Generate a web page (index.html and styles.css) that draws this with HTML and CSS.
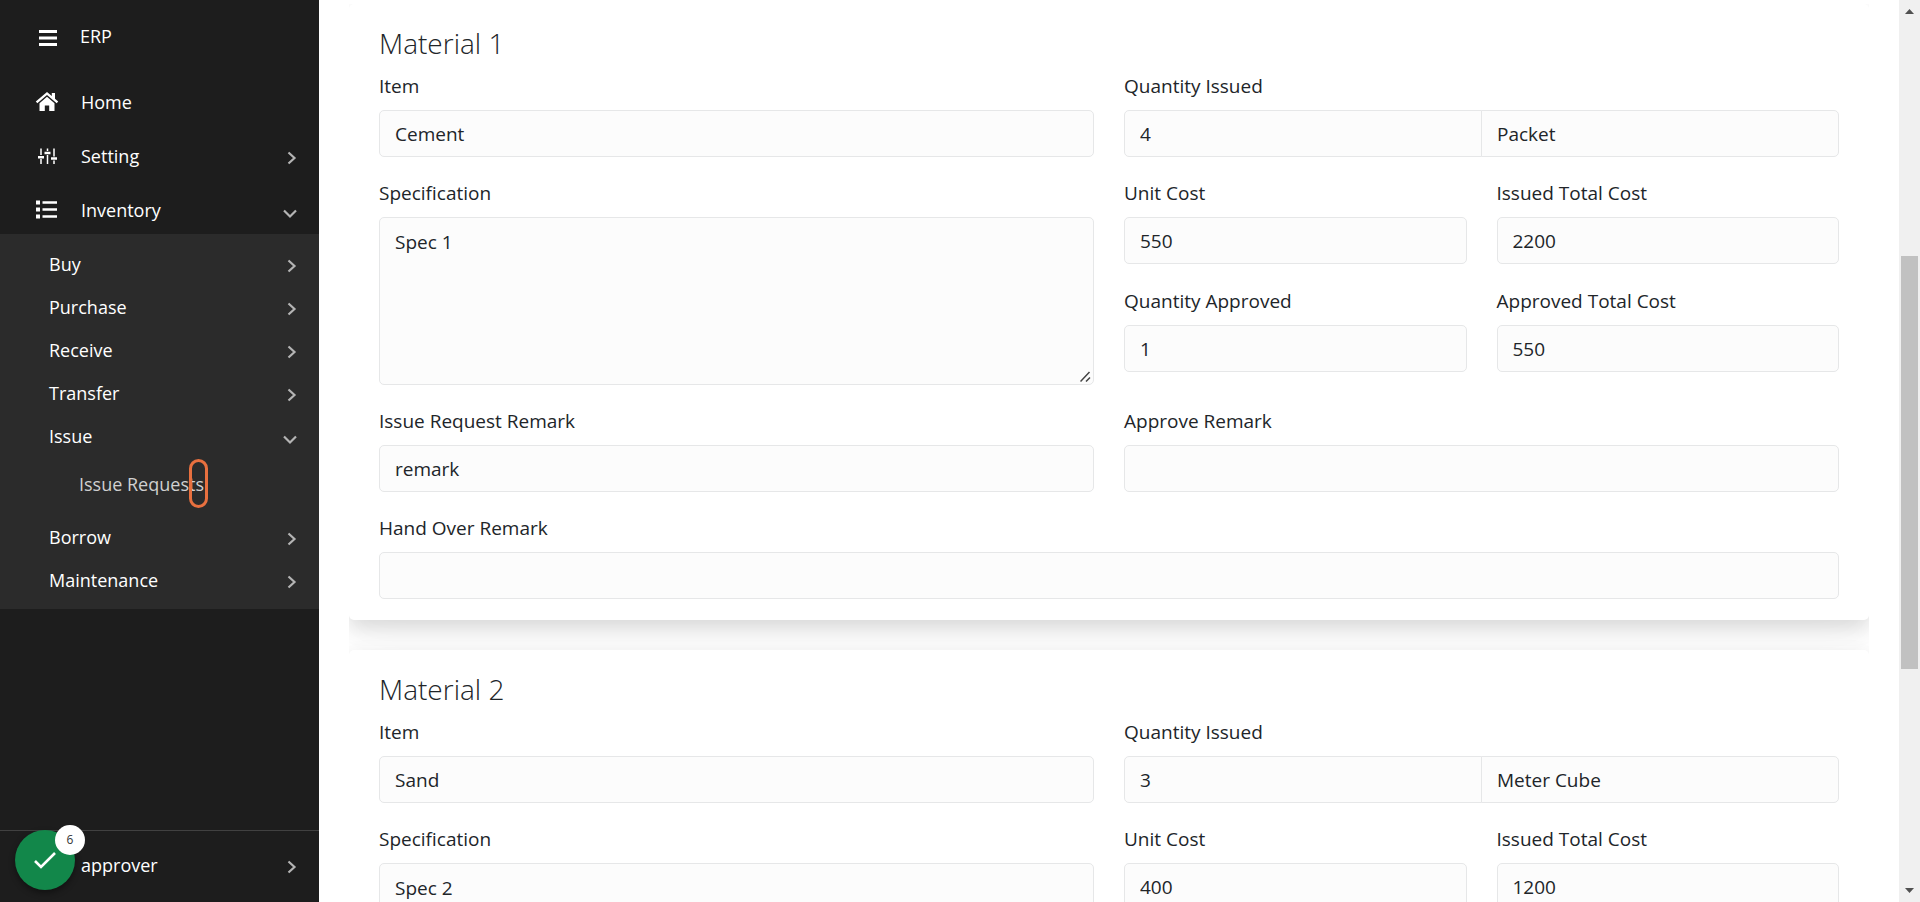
FILE: index.html
```html
<!DOCTYPE html>
<html lang="en">
<head>
<meta charset="utf-8">
<meta name="viewport" content="width=device-width, initial-scale=1">
<title>ERP</title>
<link rel="stylesheet" href="styles.css">
</head>
<body>
<svg class="sprite" aria-hidden="true">
  <symbol id="right" viewBox="0 0 10 14"><path d="M1.500 1.500 7.500 7l-6 5.500" fill="none" stroke="currentColor" stroke-width="2.200"/></symbol>
  <symbol id="down" viewBox="0 0 14 10"><path d="M1 1.500 7 7.500l6-6" fill="none" stroke="currentColor" stroke-width="2.200"/></symbol>
  <symbol id="grip" viewBox="0 0 11 11"><path d="M.5 10.500 9.500 1M6 10.500 10 6.500" fill="none" stroke="currentColor" stroke-width="1.500"/></symbol>
</svg>
<div class="app">
  <aside class="sidebar">
    <header class="brand">
      <button class="icon-button" type="button" aria-label="Toggle menu">
        <svg class="icon" viewBox="0 0 24 24"><path d="M3 5.500h18M3 12h18M3 18.500h18" stroke="currentColor" stroke-width="3" fill="none"/></svg>
      </button>
      <span>ERP</span>
    </header>
    <nav class="nav">
      <a class="nav-item" href="#home">
        <svg class="icon" viewBox="0 0 24 24" fill="currentColor"><path d="M12 2 .8 11.500l1.500 1.800L12 5l9.700 8.300 1.500-1.800L20 8.700V3h-3.200v3z"/><path d="M12 6.800 4.500 13.200V21h5.300v-5.600h4.400V21h5.300v-7.800z"/></svg>
        <span>Home</span>
      </a>
      <button class="nav-item" type="button">
        <svg class="icon" viewBox="0 0 24 24" stroke="currentColor" fill="none"><path d="M6 4.500V11m0 4v5M12.500 4.500V7m0 4v9M19 4.500v8m0 4v3.500" stroke-width="1.500"/><path d="M3 13.200h6M9.500 9h6M16 14.500h6" stroke-width="2.600"/></svg>
        <span>Setting</span>
        <svg class="chevron"><use href="#right"/></svg>
      </button>
      <button class="nav-item" type="button" aria-expanded="true">
        <svg class="icon" viewBox="0 0 24 24" stroke="currentColor" fill="none"><path d="M1 4.500h4M1 11.500h4M1 18.500h4" stroke-width="4"/><path d="M7.500 4.500H22M7.500 11.500H22M7.500 18.500H22" stroke-width="2.600"/></svg>
        <span>Inventory</span>
        <svg class="chevron chevron-down"><use href="#down"/></svg>
      </button>
      <div class="subnav">
        <button class="subnav-item" type="button"><span>Buy</span><svg class="chevron"><use href="#right"/></svg></button>
        <button class="subnav-item" type="button"><span>Purchase</span><svg class="chevron"><use href="#right"/></svg></button>
        <button class="subnav-item" type="button"><span>Receive</span><svg class="chevron"><use href="#right"/></svg></button>
        <button class="subnav-item" type="button"><span>Transfer</span><svg class="chevron"><use href="#right"/></svg></button>
        <button class="subnav-item" type="button" aria-expanded="true"><span>Issue</span><svg class="chevron chevron-down"><use href="#down"/></svg></button>
        <a class="leaf" href="#issue-requests"><span class="leaf-label">Issue Requests<i class="marker"></i></span></a>
        <button class="subnav-item" type="button"><span>Borrow</span><svg class="chevron"><use href="#right"/></svg></button>
        <button class="subnav-item" type="button"><span>Maintenance</span><svg class="chevron"><use href="#right"/></svg></button>
      </div>
    </nav>
    <footer class="account">
      <button class="nav-item account-item" type="button"><span>approver</span><svg class="chevron"><use href="#right"/></svg></button>
      <button class="fab" type="button" aria-label="Completed steps">
        <svg class="fab-icon" viewBox="0 0 24 24"><path d="m2 13 6 6L22 5" fill="none" stroke="currentColor" stroke-width="2.600"/></svg>
        <span class="badge">6</span>
      </button>
    </footer>
  </aside>

  <main class="content">
    <form class="materials">
      <section class="card">
        <h2 class="card-title">Material 1</h2>
        <div class="fields">
          <div class="field"><label for="item1">Item</label><input id="item1" class="control" value="Cement" readonly></div>
          <div class="field"><label for="qty1">Quantity Issued</label>
            <div class="group"><input id="qty1" class="control" value="4" readonly><input class="control" aria-label="Unit" value="Packet" readonly></div>
          </div>
          <div class="field area-field"><label for="spec1">Specification</label><textarea id="spec1" class="control area" readonly>Spec 1</textarea><svg class="grip"><use href="#grip"/></svg></div>
          <div class="fields costs">
            <div class="field"><label for="cost1">Unit Cost</label><input id="cost1" class="control" value="550" readonly></div>
            <div class="field"><label for="total1">Issued Total Cost</label><input id="total1" class="control" value="2200" readonly></div>
            <div class="field"><label for="appr1">Quantity Approved</label><input id="appr1" class="control" value="1" readonly></div>
            <div class="field"><label for="apprtotal1">Approved Total Cost</label><input id="apprtotal1" class="control" value="550" readonly></div>
          </div>
          <div class="field"><label for="remark1">Issue Request Remark</label><input id="remark1" class="control" value="remark" readonly></div>
          <div class="field"><label for="apprremark1">Approve Remark</label><input id="apprremark1" class="control" readonly></div>
          <div class="field wide"><label for="hand1">Hand Over Remark</label><input id="hand1" class="control" readonly></div>
        </div>
      </section>
      <section class="card">
        <h2 class="card-title">Material 2</h2>
        <div class="fields">
          <div class="field"><label for="item2">Item</label><input id="item2" class="control" value="Sand" readonly></div>
          <div class="field"><label for="qty2">Quantity Issued</label>
            <div class="group"><input id="qty2" class="control" value="3" readonly><input class="control" aria-label="Unit" value="Meter Cube" readonly></div>
          </div>
          <div class="field area-field"><label for="spec2">Specification</label><textarea id="spec2" class="control area" readonly>Spec 2</textarea><svg class="grip"><use href="#grip"/></svg></div>
          <div class="fields costs">
            <div class="field"><label for="cost2">Unit Cost</label><input id="cost2" class="control" value="400" readonly></div>
            <div class="field"><label for="total2">Issued Total Cost</label><input id="total2" class="control" value="1200" readonly></div>
          </div>
        </div>
      </section>
    </form>
  </main>

  <div class="scrollbar" aria-hidden="true">
    <svg class="arrow" viewBox="0 0 9 5"><path d="M0 5 4.500 0 9 5z"/></svg>
    <div class="track"><div class="thumb"></div></div>
    <svg class="arrow" viewBox="0 0 9 5"><path d="M0 0h9L4.500 5z"/></svg>
  </div>
</div>
</body>
</html>
```
FILE: styles.css
```css
* { box-sizing: border-box; }

body {
  margin: 0;
  background: #fff;
  color: #212529;
  font: 19px/30px "Segoe UI", "Open Sans", "Noto Sans", sans-serif;
}

button, input, textarea { font: inherit; color: inherit; }
button { border: 0; padding: 0; background: none; text-align: left; cursor: pointer; }
a { color: inherit; text-decoration: none; }

.sprite { position: absolute; width: 0; height: 0; }

.app {
  display: grid;
  grid-template-columns: 319px 1fr 21px;
  height: 100vh;
  overflow: hidden;
}

/* Sidebar */
.sidebar {
  display: flex;
  flex-direction: column;
  min-height: 0;
  background: #1d1d1d;
  color: #fff;
  font-size: 18px;
}

.brand {
  display: flex;
  align-items: center;
  gap: 20px;
  height: 72px;
  padding-left: 36px;
}

.icon-button { display: flex; padding-top: 4px; }
.icon { flex: none; width: 24px; height: 24px; }
.nav { display: flex; flex-direction: column; }

.nav-item, .subnav-item {
  display: flex;
  align-items: center;
  width: 100%;
  padding-right: 22px;
}

.nav-item { gap: 22px; height: 54px; padding-left: 35px; }
.nav-item:first-child { margin-top: 3px; }
.subnav-item { height: 43px; padding-left: 49px; }

.chevron {
  width: 10px;
  height: 14px;
  margin: 4px 0 0 auto;
  color: #b4b4b4;
}
.chevron-down { width: 14px; height: 10px; margin-top: 8px; }

.subnav { margin-top: -3px; padding: 8px 0; background: #2b2b2b; }
.leaf { display: flex; padding: 12px 0 16px 79px; color: #d0d0d0; }
.leaf-label { position: relative; }

.marker {
  position: absolute;
  top: -10px;
  right: -4px;
  width: 19px;
  height: 49px;
  border: 3px solid #e8703f;
  border-radius: 10px;
}

.account {
  position: relative;
  margin-top: auto;
  border-top: 1px solid #414141;
  padding: 7px 0 10px;
}
.account .account-item { margin: 0; padding-left: 81px; }

.fab {
  position: absolute;
  top: -1px;
  left: 15px;
  display: flex;
  align-items: center;
  justify-content: center;
  width: 60px;
  height: 60px;
  border-radius: 50%;
  background: #12874a;
  color: #fff;
  box-shadow: 0 3px 6px rgba(0, 0, 0, .4);
}
.fab-icon { width: 24px; height: 24px; }

.badge {
  position: absolute;
  top: -5px;
  right: -10px;
  width: 30px;
  border-radius: 50%;
  background: #fff;
  color: #333;
  font-size: 12px;
  line-height: 30px;
  text-align: center;
}

/* Material cards */
.content { min-width: 0; padding: 4px 30px 0; overflow: hidden; }

.materials {
  display: flex;
  flex-direction: column;
  gap: 30px;
  overflow: hidden;
}

.card {
  padding: 20px 30px 21px;
  border-radius: 5px;
  background: #fff;
  box-shadow: 0 8px 20px rgba(0, 0, 0, .13), 0 16px 48px rgba(0, 0, 0, .04);
}

.card-title {
  margin: 0 0 10px;
  font-size: 28px;
  font-weight: 300;
  line-height: 38px;
}

.fields {
  display: grid;
  grid-template-columns: 1fr 1fr;
  align-items: start;
  gap: 22px 30px;
}
.costs { row-gap: 23px; }

.field {
  display: flex;
  flex-direction: column;
  gap: 10px;
  min-width: 0;
  line-height: 28px;
}
.wide { grid-column: 1 / -1; }

.control {
  width: 100%;
  min-width: 0;
  height: 47px;
  margin: 0;
  padding: 7px 15px;
  border: 1px solid #e6e7e8;
  border-radius: 5px;
  background: #fcfcfc;
  outline: 0;
}
.area-field { position: relative; }
.area { height: 168px; padding-top: 10px; resize: none; }
.grip {
  position: absolute;
  right: 3px;
  bottom: 3px;
  width: 11px;
  height: 11px;
  color: #444;
}

.group { display: flex; }
.group .control { flex: 1; }
.group .control:first-child { border-radius: 5px 0 0 5px; }
.group .control:last-child { margin-left: -1px; border-radius: 0 5px 5px 0; }

/* Scroll track */
.scrollbar {
  display: flex;
  flex-direction: column;
  align-items: center;
  padding: 9px 0;
  background: #f0f0f0;
}
.arrow { width: 9px; height: 5px; fill: #505050; }
.track {
  display: grid;
  grid-template-rows: 242fr 413fr 219fr;
  flex: 1;
  width: 17px;
}
.thumb { grid-row: 2; background: #c1c1c1; }
```
